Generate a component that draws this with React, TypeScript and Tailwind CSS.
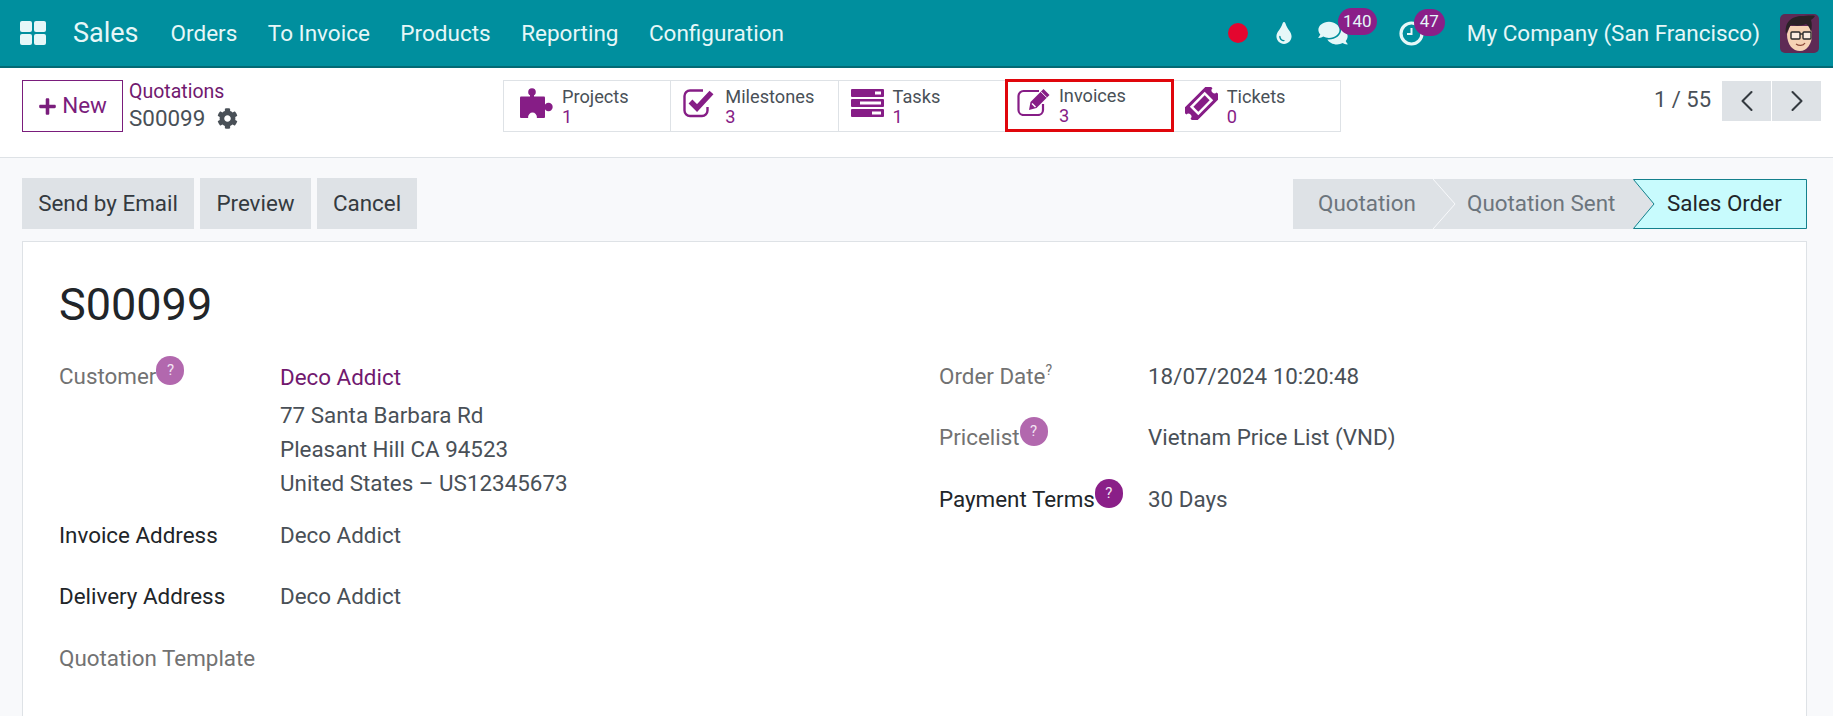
import { FaComments, FaTint, FaCog, FaPlus } from "react-icons/fa";
import { ChevronLeft, ChevronRight } from "lucide-react";

const Puzzle = () => (
  <svg width="33" height="30" viewBox="0 0 33 30" className="text-[#861d86]">
    <g fill="currentColor">
      <circle cx="12" cy="4" r="3.8" />
      <rect x="10" y="4" width="4" height="6" />
      <rect x="0" y="8.5" width="25" height="21.5" rx="1" />
      <circle cx="28.5" cy="19" r="4.2" />
      <rect x="24" y="17" width="5" height="4" />
    </g>
    <circle cx="12.5" cy="29" r="4.4" fill="#fff" />
  </svg>
);

const CheckSq = () => (
  <svg width="33" height="30" viewBox="0 0 33 30" fill="none" className="text-[#861d86]">
    <path d="M24.5 19v3.5a5.5 5.5 0 0 1-5.5 5.5H7a5.5 5.5 0 0 1-5.5-5.5V8A5.5 5.5 0 0 1 7 2.5h13" stroke="currentColor" strokeWidth="2.4" />
    <path d="M7.5 13.5 14 20 28.5 4.5" stroke="currentColor" strokeWidth="5.4" />
  </svg>
);

const Tasks = () => (
  <svg width="33" height="28" viewBox="0 0 33 28" className="text-[#861d86]">
    <g fill="currentColor">
      <rect x="0" y="0" width="33" height="8" rx="1" />
      <rect x="0" y="10" width="33" height="8" rx="1" />
      <rect x="0" y="20" width="33" height="8" rx="1" />
    </g>
    <rect x="24" y="2.5" width="6" height="3" fill="#fff" />
    <rect x="9" y="12.5" width="21" height="3" fill="#fff" />
    <rect x="21" y="22.5" width="9" height="3" fill="#fff" />
  </svg>
);

const Pencil = () => (
  <svg width="35" height="28" viewBox="0 0 35 28" fill="none" className="text-[#861d86]">
    <path d="M26 16v6a5 5 0 0 1-5 5H6.5a5 5 0 0 1-5-5V8a5 5 0 0 1 5-5H22" stroke="currentColor" strokeWidth="2.2" />
    <path d="M13.5 14 26.5 1l6 6L19.5 20 12 22z" fill="currentColor" />
    <path d="M23.8 3.6l6 6" stroke="#fff" strokeWidth="1" />
    <path d="M15 15.5l3.5 3.5" stroke="#fff" strokeWidth="1.4" />
  </svg>
);

const Ticket = () => (
  <svg width="33" height="33" viewBox="0 0 33 33" className="text-[#861d86]">
    <g transform="rotate(-45 16.5 16.5)">
      <path d="M-2 7.5h37v6a3 3 0 0 0 0 6v6H-2v-6a3 3 0 0 0 0-6z" fill="currentColor" />
      <rect x="6" y="10.5" width="21" height="12" fill="#fff" />
      <rect x="8.5" y="13" width="16" height="7" fill="currentColor" />
    </g>
  </svg>
);

const Avatar = () => (
  <svg width="39" height="39" viewBox="0 0 39 39">
    <rect width="39" height="39" rx="5" fill="#5e2a55" />
    <path d="M7 20c0 11 6 17 13 17 7 0 12-7 12-17l-2-8H10z" fill="#f5d3b5" />
    <path d="M6 20C4 8 12 2 22 2c3 0 10-1 13 0-1 2-3 3-4 4 1 3 1 7 0 12-1-4-3-7-5-8-4 2-11 2-15 1-2 2-3 5-5 9z" fill="#2a2226" />
    <g fill="none" stroke="#2b2b2b" strokeWidth="1.4">
      <rect x="11" y="18" width="9" height="7" rx="1" fill="#fff" fillOpacity=".6" />
      <rect x="23" y="18" width="8" height="7" rx="1" fill="#fff" fillOpacity=".6" />
      <path d="M20 20h3" />
    </g>
    <path d="M16 30c3 2 7 2 9-1" fill="none" stroke="#8a4a3a" strokeWidth="1.3" />
  </svg>
);

const Clock = () => (
  <svg width="25" height="25" viewBox="0 0 25 25" fill="none" stroke="#e6f7f8">
    <circle cx="12.5" cy="12.5" r="10.5" strokeWidth="3.2" />
    <path d="M12.5 7v6H8" strokeWidth="2" />
  </svg>
);

const Help = ({ dark }: { dark?: boolean }) => (
  <span
    className={
      dark
        ? "mb-[14px] flex h-[29px] w-[28px] items-center justify-center rounded-full bg-[#8a1f88] text-[15px] text-[#f3e4f3]"
        : "mb-[14px] flex h-[29px] w-[28px] items-center justify-center rounded-full bg-[#b268ae] text-[15px] text-[#f3e4f3]"
    }
  >
    ?
  </span>
);

const Stat = ({ icon, label, value, boxed, first }: { icon: React.ReactNode; label: string; value: string; boxed?: boolean; first?: boolean }) => (
  <div
    className={
      boxed
        ? "relative -mx-px -mt-[2px] flex h-[53px] w-[169px] items-center border-[3px] border-[#e0060c] pl-[9px]"
        : first
          ? "flex h-[50px] w-[167.5px] items-center border-r border-[#dee2e6] pl-[16px]"
          : "flex h-[50px] w-[167.5px] items-center border-r border-[#dee2e6] pl-[12px] last:border-r-0"
    }
  >
    <span className="-mt-[6px] flex w-[42px] shrink-0 items-center">{icon}</span>
    <span className="flex flex-col pt-[2px] text-[18.2px] leading-[20px]">
      <span className="text-[#495057]">{label}</span>
      <span className="text-[#861d86]">{value}</span>
    </span>
  </div>
);

const Row = ({ label, children, dark }: { label: React.ReactNode; children?: React.ReactNode; dark?: boolean }) => (
  <div className="flex h-[36px] items-center">
    <div className={dark ? "flex w-[221px] items-center text-[#212529]" : "flex w-[221px] items-center text-[#727272]"}>{label}</div>
    <div className="text-[#495057]">{children}</div>
  </div>
);

export default function App() {
  return (
    <div className="h-[716px] w-full overflow-hidden bg-[#f8f9fb] text-[22.4px] [font-family:Roboto,sans-serif]">
      <header className="flex h-[68px] items-center border-b-2 border-[#036a75] bg-[#008f9e] pl-[20px] pr-[14px] text-[#e6f7f8]">
        <span className="grid w-[26px] grid-cols-2 gap-[2px]">
          <i className="h-[11px] rounded-[2px] bg-[#e6f7f8]" />
          <i className="h-[11px] rounded-[2px] bg-[#e6f7f8]" />
          <i className="h-[11px] rounded-[2px] bg-[#e6f7f8]" />
          <i className="h-[11px] rounded-[2px] bg-[#e6f7f8]" />
        </span>
        <span className="ml-[27px] text-[27px]">Sales</span>
        <nav className="ml-[32px] mt-[2px] flex gap-[30.5px] text-[22.5px]">
          <span>Orders</span>
          <span>To Invoice</span>
          <span>Products</span>
          <span>Reporting</span>
          <span>Configuration</span>
        </nav>
        <div className="ml-auto flex items-center">
          <span className="h-[20px] w-[20px] rounded-full bg-[#e4062f]" />
          <FaTint className="ml-[27px] h-[22px] w-[18px]" />
          <span className="relative ml-[25px] flex">
            <FaComments className="h-[26px] w-[30px]" />
            <span className="absolute -top-[12px] left-[20px] flex h-[27px] w-[39px] items-center justify-center rounded-full bg-[#8a1f88] text-[17px]">140</span>
          </span>
          <span className="relative ml-[51px] flex">
            <Clock />
            <span className="absolute -top-[12px] left-[15px] flex h-[27px] w-[31px] items-center justify-center rounded-full bg-[#8a1f88] text-[17px]">47</span>
          </span>
          <span className="ml-[43px] mt-[2px] text-[22.5px]">My Company (San Francisco)</span>
          <span className="ml-[20px] flex"><Avatar /></span>
        </div>
      </header>

      <section className="flex h-[90px] border-b border-[#dee2e6] bg-white pl-[22px] pr-[12px] pt-[12px]">
        <div className="flex h-[52px] w-[481px]">
          <button className="flex h-[52px] w-[101px] items-center justify-center gap-[5px] border border-[#7a1d7c] text-[#7a1d7c]">
            <FaPlus className="h-[19px] w-[19px]" /> New
          </button>
          <div className="-mt-[2px] ml-[6px] flex flex-col leading-[27px]">
            <span className="text-[19.5px] text-[#71196f]">Quotations</span>
            <span className="flex items-center gap-[12px] text-[#495057]">
              S00099 <FaCog className="h-[21px] w-[21px]" />
            </span>
          </div>
        </div>
        <div className="flex h-[52px] w-[838px] items-center border border-[#dee2e6]">
          <Stat first icon={<Puzzle />} label="Projects" value="1" />
          <Stat icon={<CheckSq />} label="Milestones" value="3" />
          <Stat icon={<Tasks />} label="Tasks" value="1" />
          <Stat icon={<Pencil />} label="Invoices" value="3" boxed />
          <Stat icon={<Ticket />} label="Tickets" value="0" />
        </div>
        <div className="ml-auto mt-px flex h-[40px] items-start">
          <span className="-mt-px text-[22px] leading-[40px] text-[#495057]">1 / 55</span>
          <button className="ml-[11px] flex h-[40px] w-[49px] items-center justify-center bg-[#dee2e6] text-[#343a40]"><ChevronLeft className="h-[36px] w-[36px]" strokeWidth={1.4} /></button>
          <button className="ml-[1px] flex h-[40px] w-[49px] items-center justify-center bg-[#dee2e6] text-[#343a40]"><ChevronRight className="h-[36px] w-[36px]" strokeWidth={1.4} /></button>
        </div>
      </section>

      <section className="flex h-[83px] items-start justify-between px-[22px] pt-[20px]">
        <div className="flex gap-[6px] text-[#343a40]">
          <button className="h-[51px] w-[172px] bg-[#dee2e6]">Send by Email</button>
          <button className="h-[51px] w-[111px] bg-[#dee2e6]">Preview</button>
          <button className="h-[51px] w-[100px] bg-[#dee2e6]">Cancel</button>
        </div>
        <div className="mr-[4px] mt-px flex h-[50px] bg-[#dee2e6]">
          <div className="relative flex w-[140px] items-center pl-[25px] text-[#6c757d]">
            Quotation
            <svg width="23" height="50" viewBox="0 0 23 50" fill="none" className="absolute left-[140px] top-0 z-10">
              <path d="M0 0 22 25 0 50" stroke="#f8f9fb" strokeWidth="1" />
            </svg>
          </div>
          <div className="flex w-[200px] items-center pl-[34px] text-[#6c757d]">Quotation Sent</div>
          <div className="relative flex w-[174px] items-center pl-[34px] text-[#212529]">
            <svg width="174" height="50" viewBox="0 0 174 50" className="absolute left-0 top-0">
              <path d="M0.5 0.5H173.5V49.5H0.5L21 25Z" fill="#c8fbfd" stroke="#14808c" strokeWidth="1" />
            </svg>
            <span className="relative">Sales Order</span>
          </div>
        </div>
      </section>

      <main className="mx-[22px] mr-[26px] h-[480px] border border-[#dee2e6] bg-white px-[36px] pt-[33px]">
        <h1 className="h-[60px] text-[45px] leading-[60px] text-[#212529]">S00099</h1>
        <div className="mt-[24px] flex">
          <div className="w-[880px]">
            <Row label={<>Customer<Help /></>}><span className="inline-block pt-[2px] text-[#71196f]">Deco Addict</span></Row>
            <div className="ml-[221px] mt-[3px] leading-[34px] text-[#495057]">
              <div>77 Santa Barbara Rd</div>
              <div>Pleasant Hill CA 94523</div>
              <div>United States – US12345673</div>
            </div>
            <div className="mt-[18px]"><Row dark label="Invoice Address">Deco Addict</Row></div>
            <div className="mt-[25px]"><Row dark label="Delivery Address">Deco Addict</Row></div>
            <div className="mt-[26px]"><Row label="Quotation Template" /></div>
          </div>
          <div className="[&_.w-\[221px\]]:w-[209px]">
            <Row label={<>Order Date<sup className="-top-[7px] text-[14px]">?</sup></>}>18/07/2024 10:20:48</Row>
            <div className="mt-[25px]"><Row label={<>Pricelist<Help /></>}>Vietnam Price List (VND)</Row></div>
            <div className="mt-[26px]"><Row dark label={<>Payment Terms<Help dark /></>}>30 Days</Row></div>
          </div>
        </div>
      </main>
    </div>
  );
}
